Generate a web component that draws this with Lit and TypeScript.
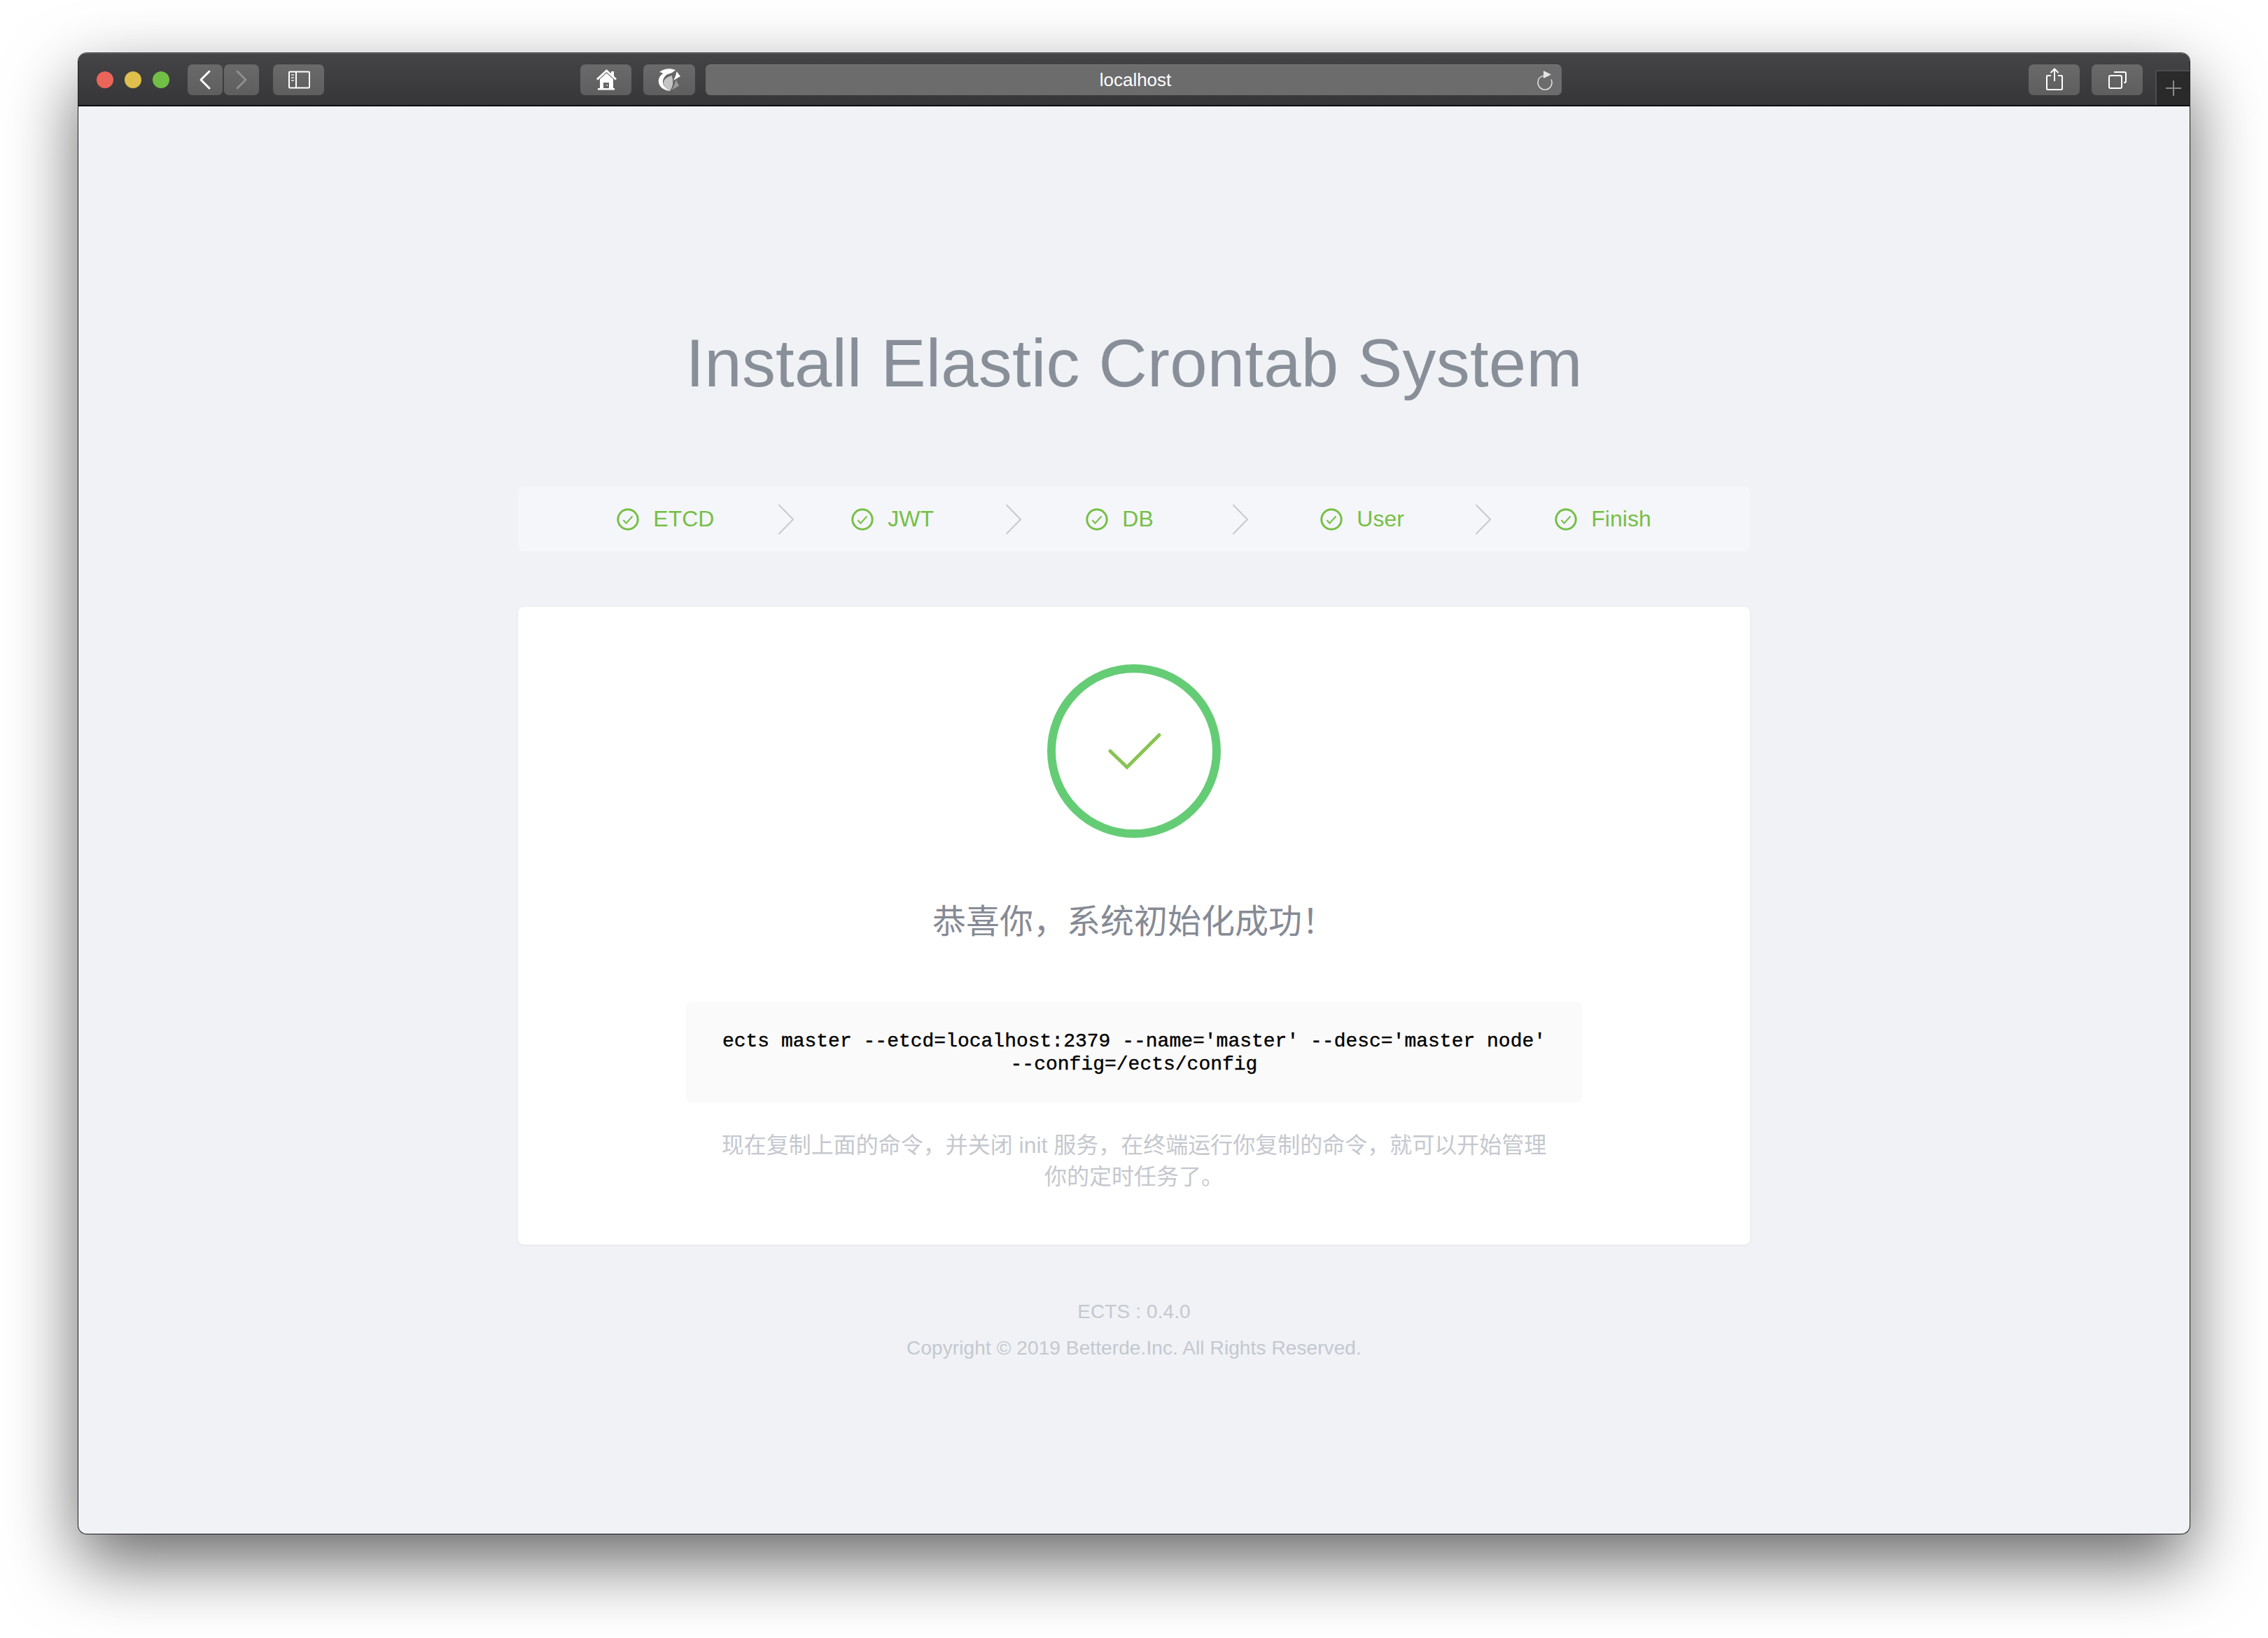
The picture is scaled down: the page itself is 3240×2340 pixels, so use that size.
import { LitElement, css, html, svg } from "lit";
import { customElement } from "lit/decorators.js";

const STEPS = ["ETCD", "JWT", "DB", "User", "Finish"];

const icon = (body: unknown, w = 73) => html`
  <svg class="icon" width=${w} height="44" viewBox="0 0 ${w} 44" fill="none">${body}</svg>
`;

const backIcon = svg`<path d="M31 10 19 22l12 12" stroke="#fff" stroke-width="3" stroke-linecap="round" stroke-linejoin="round"/>`;
const forwardIcon = svg`<path d="M19 10l12 12-12 12" stroke="#8e8e8e" stroke-width="3" stroke-linecap="round" stroke-linejoin="round"/>`;
const sidebarIcon = svg`
  <rect x="23" y="10.5" width="29" height="23" rx="1" stroke="#fff" stroke-width="2"/>
  <path d="M33 10.5v23" stroke="#fff" stroke-width="2"/>
  <path d="M26 15h4M26 19h4M26 23h4" stroke="#c8c8c8" stroke-width="2"/>`;
const homeIcon = svg`
  <path d="M24 21.5 37.5 9 51 21.5" stroke="#fff" stroke-width="3"/>
  <path d="M44 10h4v7h-4z" fill="#fff"/>
  <path d="M28 21 37.5 12.5 47 21v13H28z" fill="#fff"/>
  <path d="M33 26h8v8h-8z" fill="#666"/>
  <path d="M37.5 29h1.5v1.5h-1.5z" fill="#fff"/>
  <path d="M25 34h24v2.5H25z" fill="#fff"/>`;
const logoIcon = svg`
  <path d="M46 8C38 5 29 6 23 11c2 0 4 1 5 2-4 3-7 7-6 13 1 6 7 11 16 12-6-4-10-8-10-13 0-5 3-9 7-11 3-1 7-2 11-6z" fill="#fff"/>
  <path d="M41 16c-8 2-12 6-12 10 0 5 4 9 9 12 3-4 5-10 4-15 0-3-1-5-1-7z" fill="#c4c4c4"/>
  <path d="M46.500 22 51 30.500 40.500 36.500c3-5 5-9 6-14.500z" fill="#9a9a9a"/>
  <path d="M47.500 10 53 17 43 23c2-4 4-8 4.500-13z" fill="#fff"/>`;
const reloadIcon = html`
  <svg class="reload" width="22" height="28" viewBox="0 0 22 28" fill="none">
    <path d="M9 7.500C4 8 1 12 1 17c0 5.500 4.500 10 10 10s10-4.500 10-10c0-1.500-.3-3-1-4.500" stroke="#dcdcdc" stroke-width="1.600"/>
    <path d="M9 0l11 5.500L9 11z" fill="#e4e4e4"/>
  </svg>
`;
const shareIcon = svg`
  <path d="M32 16h-5a1 1 0 0 0-1 1v18a1 1 0 0 0 1 1h20a1 1 0 0 0 1-1V17a1 1 0 0 0-1-1h-5" stroke="#fff" stroke-width="2"/>
  <path d="M37 7v17M31.500 12 37 6.500l5.500 5.500" stroke="#fff" stroke-width="2"/>`;
const tabsIcon = svg`
  <rect x="25" y="16" width="18" height="18" rx="2" stroke="#fff" stroke-width="2"/>
  <path d="M32 11h15a2 2 0 0 1 2 2v11a2 2 0 0 1-2 2h-1" stroke="#fff" stroke-width="2"/>`;

@customElement("app-root")
export class AppRoot extends LitElement {
  static styles = css`
    :host {
      display: block;
      height: 2340px;
      box-sizing: border-box;
      padding: 76px 112px 149px 112px;
      background: #fff;
      font-family: "Liberation Sans", "Noto Sans CJK SC", sans-serif;
    }
    .window {
      height: 2115px;
      border-radius: 12px;
      overflow: hidden;
      background: #f0f2f6;
      box-shadow: 0 0 0 1px rgba(0, 0, 0, 0.85), 0 40px 100px rgba(0, 0, 0, 0.6);
    }
    .toolbar {
      box-sizing: border-box;
      height: 76px;
      display: flex;
      align-items: flex-start;
      padding-top: 15px;
      padding-left: 26px;
      background: linear-gradient(#444446, #363638);
      border-top: 1px solid #6a6a6a;
      border-bottom: 2px solid #0c0c0c;
    }
    .lights {
      display: flex;
      gap: 16px;
      padding-top: 10px;
      margin-right: 26px;
    }
    .light {
      width: 24px;
      height: 24px;
      border-radius: 50%;
    }
    .red { background: #ec6559; }
    .yellow { background: #e0bf4c; }
    .green { background: #71bf46; }
    .btn {
      display: block;
      height: 44px;
      border-radius: 7px;
      background: linear-gradient(#6a6a6b, #5e5e5f);
    }
    .icon { display: block; }
    .m2 { margin-left: 2px; }
    .m20 { margin-left: 20px; }
    .home { margin-left: 366px; }
    .m17 { margin-left: 17px; }
    .url {
      box-sizing: border-box;
      width: 1223px;
      height: 44px;
      margin-left: 15px;
      padding: 0 13px 0 40px;
      display: flex;
      align-items: center;
      border-radius: 7px;
      background: #6c6c6d;
      border-top: 1px solid #7c7c7c;
      color: #fff;
      font-size: 26px;
    }
    .url span {
      flex: 1;
      text-align: center;
    }
    .reload { display: block; }
    .share { margin-left: 667px; }
    .plus {
      box-sizing: border-box;
      flex: 1;
      height: 50px;
      margin: 8px 0 0 18px;
      display: flex;
      align-items: center;
      justify-content: center;
      background: #2a2a2b;
      border-top: 2px solid #4d4d4e;
      border-left: 2px solid #4d4d4e;
    }
    .content {
      display: flex;
      flex-direction: column;
      align-items: center;
    }
    h1 {
      margin: 311px 0 120px;
      font-size: 96px;
      line-height: 112px;
      font-weight: 400;
      letter-spacing: 0.2px;
      color: #898f99;
    }
    .steps {
      box-sizing: border-box;
      width: 1760px;
      height: 93px;
      display: flex;
      justify-content: center;
      align-items: center;
      border-radius: 8px;
      background: #f5f6fa;
      color: #75bf45;
      font-size: 32px;
    }
    .step {
      width: 335px;
      display: flex;
      align-items: center;
    }
    .step:last-child { width: auto; }
    .step-icon { display: block; margin-right: 20px; }
    .arrow {
      flex: 1;
      display: flex;
      justify-content: center;
      padding-left: 10px;
    }
    .arrow svg { display: block; }
    .card {
      box-sizing: border-box;
      width: 1760px;
      height: 911px;
      margin-top: 79px;
      padding-top: 82px;
      display: flex;
      flex-direction: column;
      align-items: center;
      border-radius: 8px;
      background: #fff;
      box-shadow: 0 1px 4px rgba(0, 0, 0, 0.06);
    }
    .result { display: block; }
    h2 {
      margin: 88px 0 0;
      font-size: 48px;
      line-height: 64px;
      font-weight: 400;
      color: #868a94;
    }
    .code {
      box-sizing: border-box;
      width: 1280px;
      height: 144px;
      margin-top: 82px;
      padding: 2px 48px 0;
      display: flex;
      align-items: center;
      justify-content: center;
      text-align: center;
      border-radius: 8px;
      background: #fafafa;
      color: #000;
      font-family: "Liberation Mono", monospace;
      font-size: 28px;
      line-height: 33px;
      -webkit-text-stroke: 0.4px #000;
    }
    .desc {
      box-sizing: border-box;
      width: 1280px;
      margin: 39px 0 0;
      padding: 0 48px;
      text-align: center;
      color: #c5c8ce;
      font-size: 32px;
      line-height: 45px;
    }
    footer {
      margin-top: 70px;
      text-align: center;
      color: #c5c8ce;
      font-size: 28px;
      line-height: 52px;
      letter-spacing: 0.1px;
    }
  `;

  render() {
    return html`
      <div class="window">
        <div class="toolbar">
          <div class="lights">
            <div class="light red"></div>
            <div class="light yellow"></div>
            <div class="light green"></div>
          </div>
          <div class="btn">${icon(backIcon, 50)}</div>
          <div class="btn m2">${icon(forwardIcon, 50)}</div>
          <div class="btn m20">${icon(sidebarIcon)}</div>
          <div class="btn home">${icon(homeIcon)}</div>
          <div class="btn m17">${icon(logoIcon, 74)}</div>
          <div class="url"><span>localhost</span>${reloadIcon}</div>
          <div class="btn share">${icon(shareIcon)}</div>
          <div class="btn m17">${icon(tabsIcon)}</div>
          <div class="plus">
            <svg width="22" height="22" viewBox="0 0 22 22"><path d="M11 0v22M0 11h22" stroke="#8a8a8a" stroke-width="2"/></svg>
          </div>
        </div>
        <div class="content">
          <h1>Install Elastic Crontab System</h1>
          <div class="steps">
            ${STEPS.map(
              (name, i) => html`
                <div class="step">
                  <svg class="step-icon" width="32" height="32" viewBox="0 0 32 32" fill="none">
                    <circle cx="16" cy="16" r="14.2" stroke="#75bf45" stroke-width="3"/>
                    <path d="M9.5 17l4 4.5 9-10" stroke="#75bf45" stroke-width="2"/>
                  </svg>
                  <span>${name}</span>
                  ${i < STEPS.length - 1
                    ? html`<div class="arrow">
                        <svg width="22" height="44" viewBox="0 0 22 44" fill="none">
                          <path d="M0.5 1 21 22 0.5 43" stroke="#c8cad0" stroke-width="2"/>
                        </svg>
                      </div>`
                    : null}
                </div>
              `,
            )}
          </div>
          <div class="card">
            <svg class="result" width="248" height="248" viewBox="0 0 248 248" fill="none">
              <circle cx="124" cy="124" r="118" stroke="#65cc76" stroke-width="12"/>
              <path d="M90 124l24 23 46-46" stroke="#87c452" stroke-width="5" stroke-linecap="round"/>
            </svg>
            <h2>恭喜你，系统初始化成功！</h2>
            <div class="code">ects master --etcd=localhost:2379 --name='master' --desc='master node' --config=/ects/config</div>
            <p class="desc">现在复制上面的命令，并关闭 init 服务，在终端运行你复制的命令，就可以开始管理你的定时任务了。</p>
          </div>
          <footer>
            <div>ECTS : 0.4.0</div>
            <div>Copyright © 2019 Betterde.Inc. All Rights Reserved.</div>
          </footer>
        </div>
      </div>
    `;
  }
}

declare global {
  interface HTMLElementTagNameMap {
    "app-root": AppRoot;
  }
}
